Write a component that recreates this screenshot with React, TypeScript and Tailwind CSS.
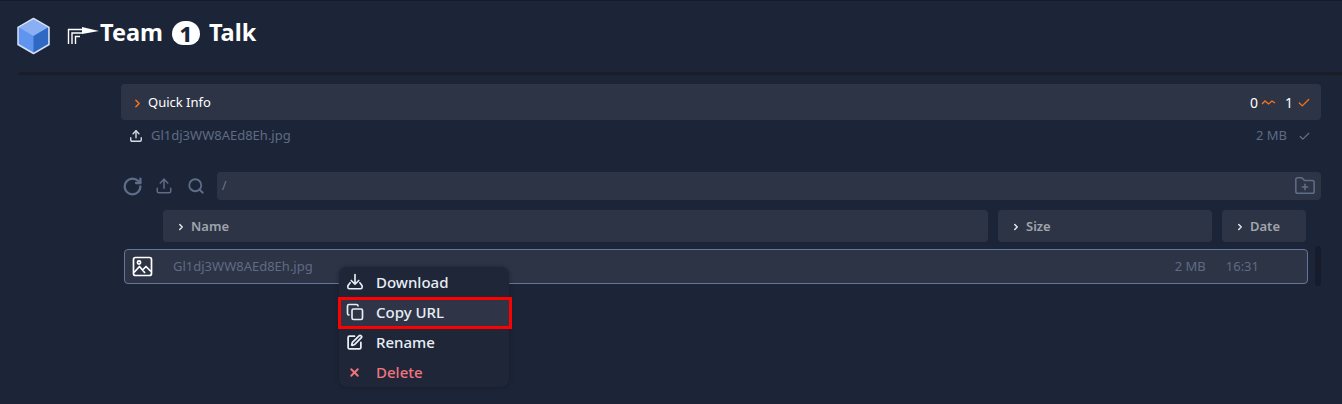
import { ChevronRight, Check, RotateCw, Upload, Search, FolderPlus, Copy, SquarePen, X } from 'lucide-react';

const HeaderCell = ({ label, className }: { label: string; className: string }) => (
  <div className={`h-8 pt-[2px] flex items-center rounded bg-[#2d3446] pl-[13px] gap-[5px] ${className}`}>
    <ChevronRight size={10} strokeWidth={3.5} className="text-[#e5e7eb]" />
    <span className="text-[13px] font-semibold text-[#a0a4ad]">{label}</span>
  </div>
);

const MenuItem = ({ icon, label, className }: { icon: React.ReactNode; label: string; className?: string }) => (
  <div className={`h-[30px] flex items-center pl-[6px] gap-[12px] text-[15px] font-medium ${className ?? 'text-[#e8eef5]'}`}>
    <span className="w-[19px] flex justify-center">{icon}</span>
    <span>{label}</span>
  </div>
);

export default function App() {
  return (
    <div className="relative w-[1342px] h-[404px] overflow-hidden bg-[#1c2538] font-['Noto_Sans',sans-serif] border-t border-[#151b29]">
      <div className="h-[71px] pl-4 pb-[9px] flex items-center">
        <svg width="35" height="38" viewBox="0 0 35 38" className="mt-[8px]">
          <path d="M17.5 1.5 33 10.5 33 27.5 17.5 36.5 2 27.5 2 10.5Z" fill="#5f95ee" stroke="#d5e2f7" strokeWidth="1.5" strokeLinejoin="round" />
          <path d="M17.5 2.5 32 10.5 17.5 19 3 10.5Z" fill="#8ab0f3" />
          <path d="M17.5 19 32 10.5 32 27 17.5 35.5Z" fill="#2f69c4" />
        </svg>
        <div className="ml-[16px] flex items-center">
          <svg width="33" height="20" viewBox="0 0 33 20" className="mt-[8px]">
            <path d="M1.5 18V3.5H15M5 18V7H15M8.5 18V10.5H13" fill="none" stroke="#fff" strokeWidth="1.4" />
            <path d="M15 1 32 5 15 8Z" fill="#fff" />
          </svg>
          <span className="mt-[2px] text-[23.5px] leading-none font-bold text-white flex items-center gap-[9px]">
            Team
            <span className="w-[28px] h-[24px] rounded-t-[14px] rounded-b-[12px] bg-white text-[#1c2538] flex items-center justify-center text-[22px] font-extrabold">1</span>
            Talk
          </span>
        </div>
      </div>
      <div className="ml-[19px] h-[3px] bg-[#1a1d27]" />
      <div className="ml-[121px] w-[1200px] mt-[9px]">
        <div className="h-9 pt-[2px] rounded bg-[#2d3446] flex items-center pl-[10px] pr-[10px]">
          <ChevronRight size={13} strokeWidth={2.8} className="text-[#f97316]" />
          <span className="ml-[4px] text-[13px] text-white">Quick Info</span>
          <span className="ml-auto -mt-[2px] text-[14px] text-white">0</span>
          <svg width="15" height="8" viewBox="0 0 15 8" className="ml-[3px]">
            <path d="M1 5 4 2 7.5 5 11 2 14 4" fill="none" stroke="#f97316" strokeWidth="1.3" />
          </svg>
          <span className="ml-[9px] -mt-[2px] text-[14px] text-white">1</span>
          <Check size={14} strokeWidth={2.2} className="ml-[4px] text-[#f97316]" />
        </div>
        <div className="h-[30px] pt-[2px] flex items-center pl-[8px] pr-[10px] text-[13px] text-[#5f6b84]">
          <Upload size={14} strokeWidth={2.4} className="text-[#d5dce6]" />
          <span className="ml-[8px]">Gl1dj3WW8AEd8Eh.jpg</span>
          <span className="ml-auto">2 MB</span>
          <Check size={13} strokeWidth={2} className="ml-[11px] text-[#6b7280]" />
        </div>
        <div className="mt-[22px] h-7 flex items-center">
          <RotateCw size={21} strokeWidth={2.6} className="ml-[1px] text-[#5e6d88]" />
          <Upload size={18} strokeWidth={2} className="ml-[12px] text-[#5e6d88]" />
          <Search size={18} strokeWidth={2.4} className="ml-[14px] text-[#5e6d88]" />
          <div className="ml-[12px] flex-1 h-7 rounded bg-[#2d3446] flex items-center pl-[5px] pr-[5px]">
            <span className="text-[12px] text-[#6b7a94]">/</span>
            <FolderPlus size={22} strokeWidth={1.7} className="ml-auto text-[#5e6d88]" />
          </div>
        </div>
        <div className="mt-[10px] ml-[42px] flex gap-[10px]">
          <HeaderCell label="Name" className="w-[825px]" />
          <HeaderCell label="Size" className="w-[214px]" />
          <HeaderCell label="Date" className="w-[84px]" />
        </div>
        <div className="mt-[4px] flex items-center">
          <div className="ml-[3px] w-[1184px] h-[35px] pt-[1px] rounded border border-[#64779b] bg-[#2d3446] flex items-center text-[13px] text-[#5f6b84]">
            <svg width="21" height="21" viewBox="0 0 21 21" fill="none" stroke="#fff" strokeWidth="1.7" strokeLinejoin="round" className="ml-[7px]">
              <rect x="1.5" y="1.5" width="18" height="18" rx="2" />
              <circle cx="7" cy="6.5" r="1.6" />
              <path d="M2 16.5 7.5 10.5 13 17M10.5 14 14 10.5 19 15.5" />
            </svg>
            <span className="ml-[20px]">Gl1dj3WW8AEd8Eh.jpg</span>
            <span className="ml-auto">2 MB</span>
            <span className="ml-[20px] mr-[48px]">16:31</span>
          </div>
          <div className="ml-[7px] w-[6px] h-10 rounded bg-[#161c2c]" />
        </div>
      </div>
      <div className="absolute left-[339px] top-[266px] w-[170px] h-[120px] rounded-lg bg-[#1e2638] shadow-[0_0_4px_rgba(0,0,0,0.35)]">
        <MenuItem
          icon={
            <svg width="18" height="18" viewBox="0 0 24 24" fill="none" stroke="currentColor" strokeWidth="2.2" strokeLinecap="round" strokeLinejoin="round">
              <path d="M12 2v13M7 10l5 5 5-5M5.5 13 2.5 17v2a2 2 0 0 0 2 2h15a2 2 0 0 0 2-2v-2l-3-4" />
            </svg>
          }
          label="Download"
        />
        <MenuItem icon={<Copy size={18} strokeWidth={2.2} />} label="Copy URL" className="text-[#e8eef5] bg-[#2f3547]" />
        <MenuItem icon={<SquarePen size={17} strokeWidth={2.5} />} label="Rename" />
        <MenuItem icon={<X size={13} strokeWidth={3.5} className="text-[#f0747e]" />} label="Delete" className="text-[#f0747e]" />
      </div>
      <div className="absolute left-[338px] top-[296px] w-[174px] h-[32px] border-[3px] border-[#ff0000]" />
    </div>
  );
}
